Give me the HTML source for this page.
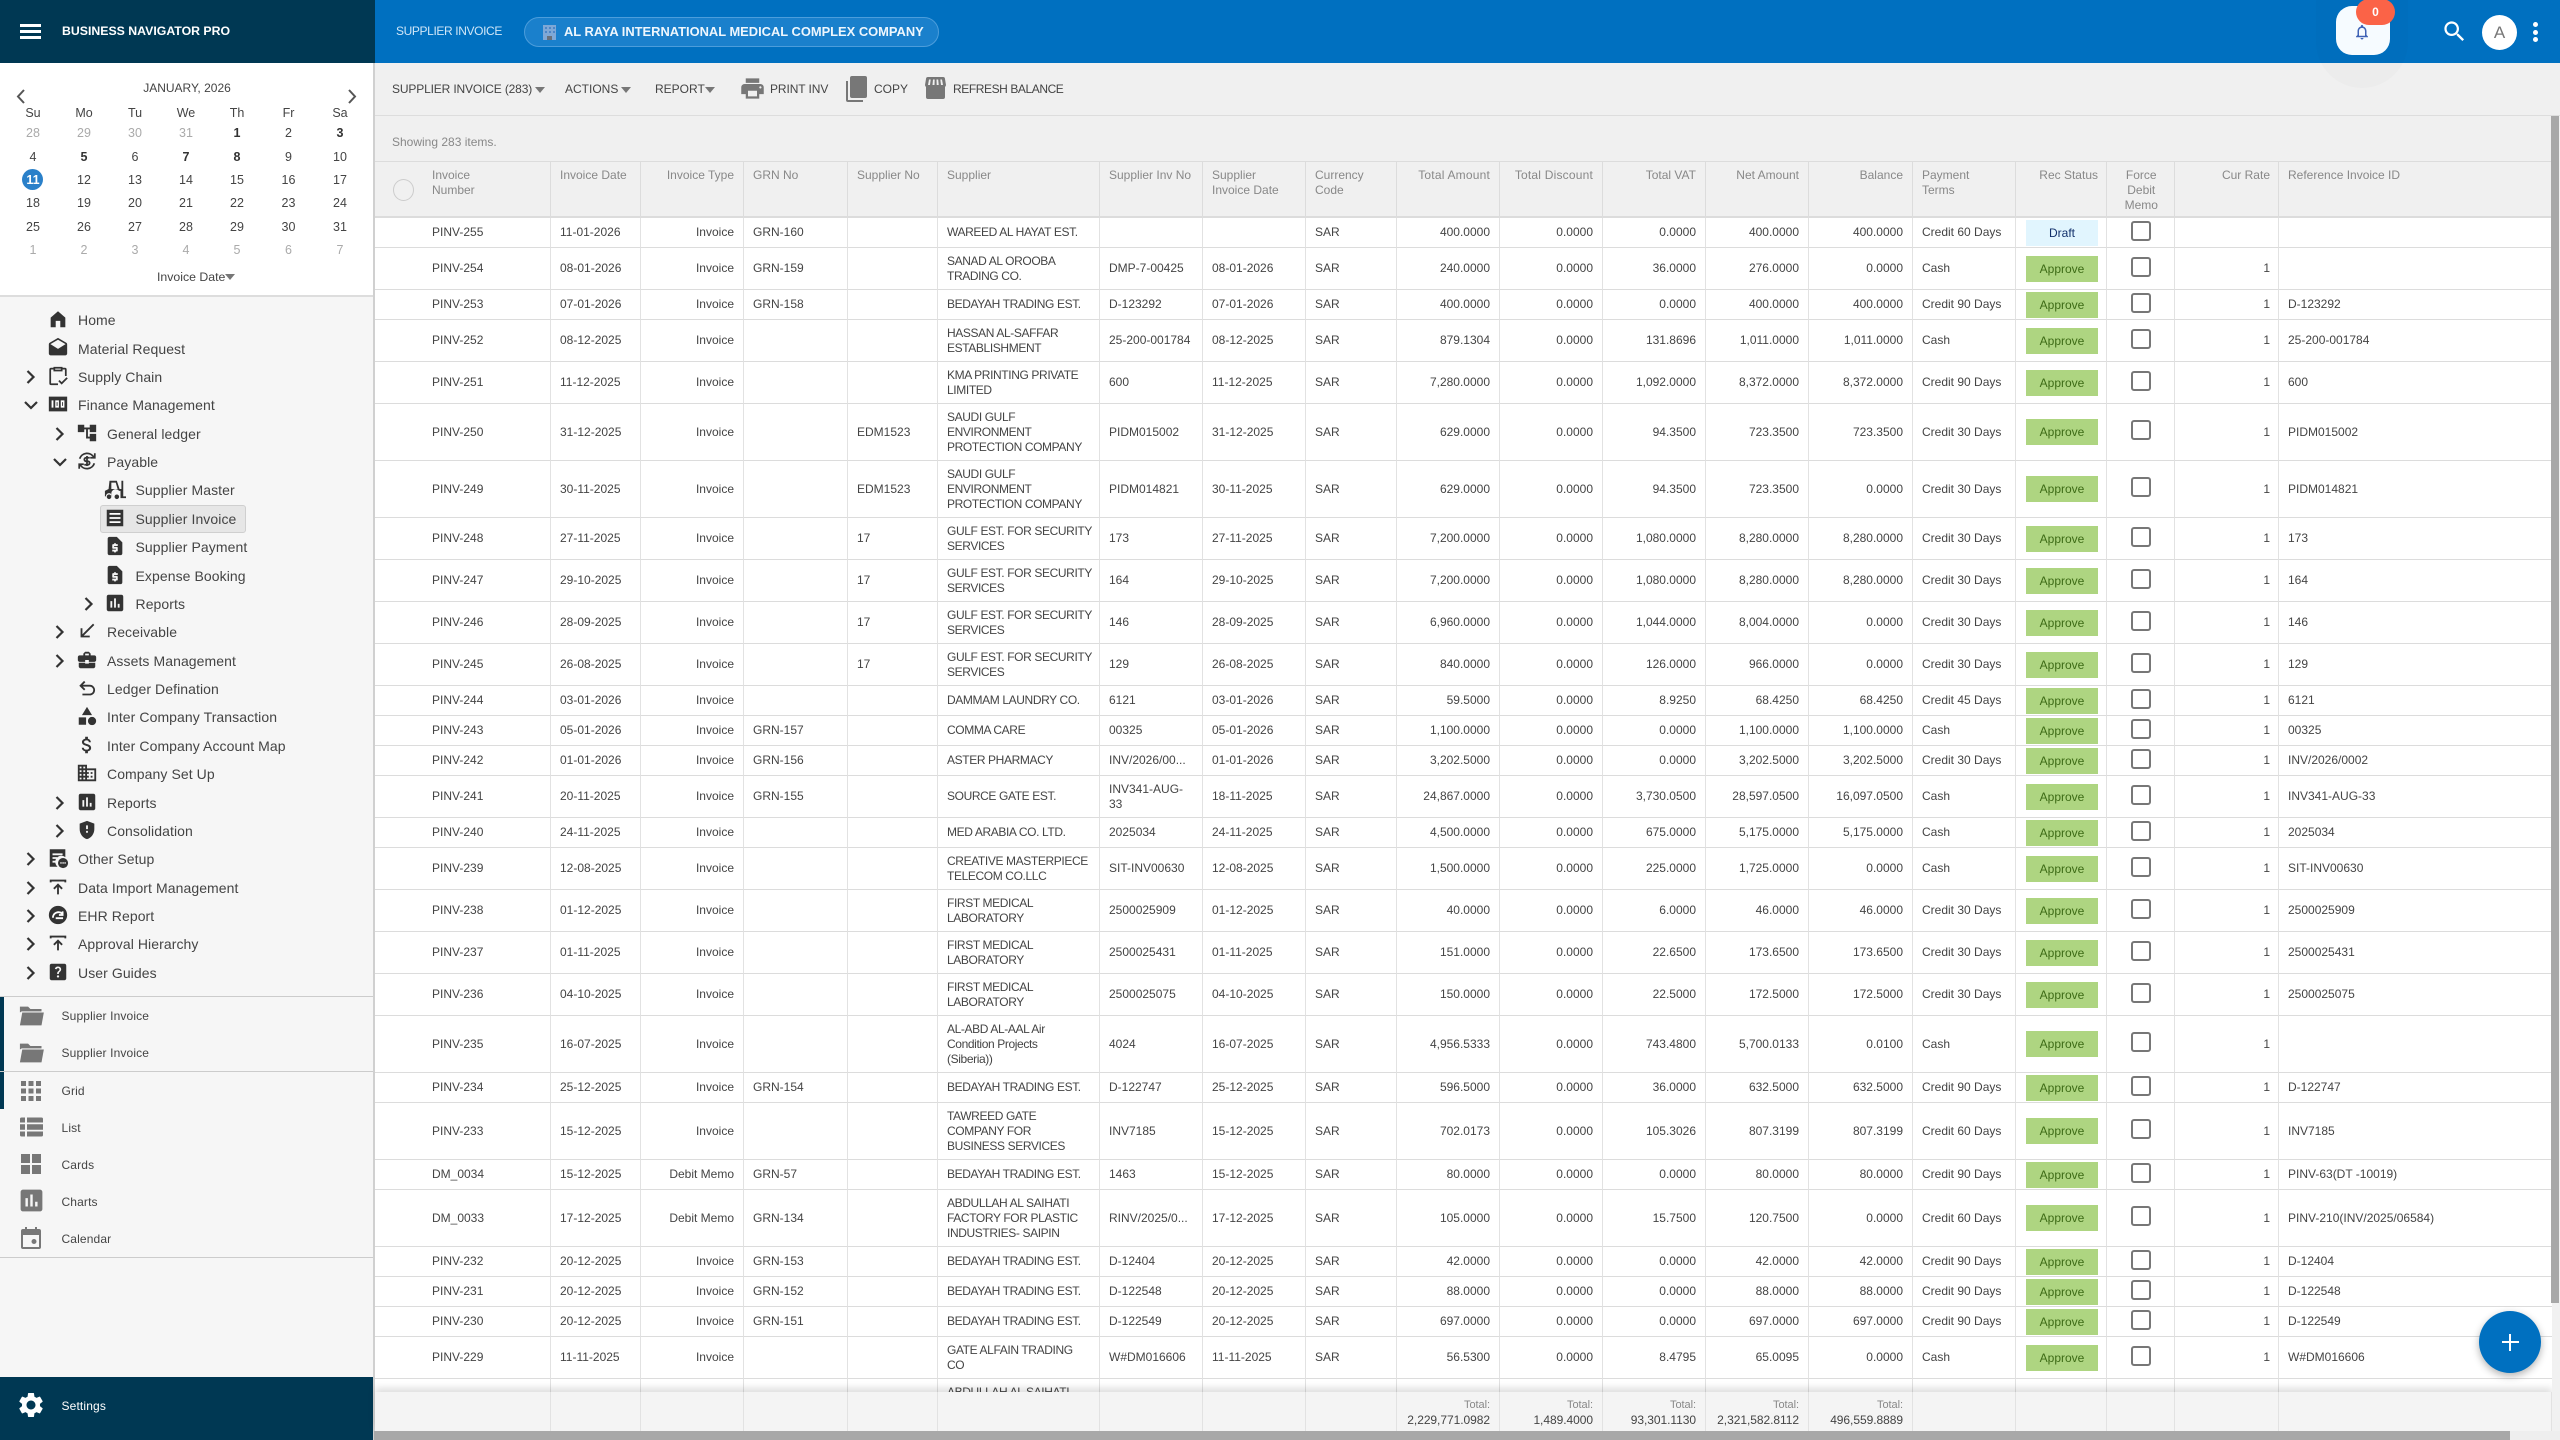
<!DOCTYPE html>
<html><head><meta charset="utf-8"><title>Supplier Invoice</title>
<style>
*{box-sizing:border-box}
html,body{margin:0;padding:0;width:2560px;height:1440px;overflow:hidden;background:#f0f0f0;font-family:"Liberation Sans",sans-serif;color:#444}
.abs,.cd,.m,.bt,.tb{position:absolute}
svg{display:block}
#lh{left:0;top:0;width:375px;height:63px;background:#003853;position:absolute}
#th{left:375px;top:0;width:2185px;height:63px;background:#0070c0;position:absolute}
#side{position:absolute;left:0;top:63px;width:375px;height:1377px;background:#f6f6f6;border-right:2px solid #d0d0d0}
#cal{position:absolute;left:0;top:63px;width:373px;height:234px;background:#fff;border-bottom:2px solid #ddd}
.cd{width:40px;margin-left:-20px;text-align:center;font-size:12.5px;line-height:16px;color:#444;height:16px}
.cd.g{color:#aaa}.cd.b{font-weight:bold;color:#333}
.m{height:24px;line-height:24px;font-size:14px;color:#444;letter-spacing:.08px;white-space:nowrap}
.m svg,.bt svg{position:absolute;top:0}
.bt{height:24px;line-height:24px;font-size:12px;color:#444;left:61.5px;letter-spacing:.14px}
.tb{font-size:12px;color:#444;line-height:16px;top:81px;white-space:nowrap}
.car{position:absolute;width:0;height:0;border-left:5.5px solid transparent;border-right:5.5px solid transparent;border-top:6px solid #777}
#wrap{position:absolute;left:375px;top:161px;width:2177px;height:1231px;overflow:hidden}
table{border-collapse:separate;border-spacing:0;table-layout:fixed;width:2177px}
td,th{padding:0 9px;font-size:12px;line-height:15px;font-weight:normal;border-right:1px solid #e2e2e2;border-bottom:1px solid #dcdcdc;color:#444;vertical-align:middle;text-align:left;white-space:nowrap;overflow:hidden;background:#fff}
th{height:57px;vertical-align:top;padding-top:6px;background:#f0f0f0;color:#888;border-top:1px solid #dcdcdc;border-right-color:#dcdcdc;border-bottom:2px solid #dcdcdc}
td:first-child,th:first-child{padding-left:57px}
tr.a td{height:30px}tr.b td{height:42px}tr.c td{height:57px}
td:nth-child(3),td:nth-child(n+10):nth-child(-n+14),td:nth-child(18),th:nth-child(3),th:nth-child(n+10):nth-child(-n+14),th:nth-child(16),th:nth-child(18){text-align:right}
th:nth-child(10),th:nth-child(11){letter-spacing:.2px}
th:nth-child(16){padding-right:8px}
td:nth-child(18),th:nth-child(18){padding-right:8px}
th:nth-child(17){text-align:center;padding:6px 0 0 1.5px}
td:nth-child(6){letter-spacing:-.38px}
td:nth-child(16){padding:0 0 0 10px}
td:nth-child(17){padding:0 0 0 1.5px}
td:last-child,th:last-child{border-right:0}
b.p,b.d{display:block;width:72px;height:26px;line-height:26px;text-align:center;font-weight:normal}
b.p{background:#aed581;color:#3d6b16}b.d{background:#e1f5fe;color:#12306b}
i.k{display:block;width:20px;height:20px;border:2.5px solid #777;border-radius:3px;margin:-4px auto 0;background:#fff}
#ft{position:absolute;left:375px;top:1392px;width:2177px;height:39px;box-shadow:0 -4px 7px rgba(0,0,0,.13)}
#ft td{height:39px;background:#f4f4f4;padding:2px 9px 0;line-height:15px;border-bottom:0;border-right:1px solid #e2e2e2;letter-spacing:-.05px}
#ft td:first-child{padding-left:0}
#ft span{color:#888;font-size:11px;display:block}
</style></head><body>
<div id="lh"></div><div id="th"></div>
<div class="abs" style="left:20px;top:24px;width:21px;height:3px;background:#fff"></div>
<div class="abs" style="left:20px;top:30px;width:21px;height:3px;background:#fff"></div>
<div class="abs" style="left:20px;top:36px;width:21px;height:3px;background:#fff"></div>
<div class="abs" style="left:62px;top:22px;font-size:12.3px;line-height:18px;font-weight:bold;color:#fff;white-space:nowrap">BUSINESS NAVIGATOR PRO</div>
<div class="abs" style="left:396px;top:22px;font-size:12px;line-height:18px;color:#cfe6f7;white-space:nowrap;letter-spacing:-.38px">SUPPLIER INVOICE</div>
<div class="abs" style="left:524px;top:17px;width:415px;height:30px;border-radius:15px;background:#1a80cc;border:1px solid #4c9ddb"></div>
<svg class="abs" style="left:541px;top:24px" width="17" height="17" viewBox="0 0 17 17"><rect x="2" y="1" width="13" height="15" fill="#7fa8d6"/><rect x="4" y="3" width="2" height="2" fill="#4d86c7"/><rect x="8" y="3" width="2" height="2" fill="#4d86c7"/><rect x="12" y="3" width="2" height="2" fill="#4d86c7"/><rect x="4" y="7" width="2" height="2" fill="#4d86c7"/><rect x="8" y="7" width="2" height="2" fill="#4d86c7"/><rect x="12" y="7" width="2" height="2" fill="#4d86c7"/><rect x="6" y="12" width="5" height="4" fill="#69707a"/></svg>
<div class="abs" style="left:564px;top:23px;font-size:12.9px;line-height:18px;font-weight:bold;color:#eef6fd;white-space:nowrap">AL RAYA INTERNATIONAL MEDICAL COMPLEX COMPANY</div>

<div class="abs" style="left:2316px;top:0;width:92px;height:88px;border-radius:0 0 46px 46px;background:rgba(0,0,0,.015)"></div>
<div class="abs" style="left:2336px;top:6px;width:54px;height:49px;border-radius:16px;background:#f6fbff"></div>
<svg class="abs" style="left:2353px;top:23px" width="18" height="18" viewBox="0 0 24 24"><path fill="#3f62b5" d="M12 22c1.1 0 2-.9 2-2h-4c0 1.1.9 2 2 2zm6-6v-5c0-3.07-1.63-5.64-4.5-6.32V4c0-.83-.67-1.5-1.5-1.5s-1.5.67-1.5 1.5v.68C7.64 5.36 6 7.92 6 11v5l-2 2v1h16v-1l-2-2zm-2 1H8v-6c0-2.48 1.51-4.5 4-4.5s4 2.02 4 4.5v6z"/></svg>
<div class="abs" style="left:2356px;top:-1px;width:39px;height:26px;border-radius:13px;background:#fb6347;color:#fff;font-size:12px;font-weight:bold;line-height:27px;text-align:center">0</div>
<svg class="abs" style="left:2441px;top:18px" width="27" height="27" viewBox="0 0 24 24"><path fill="#fff" d="M15.5 14h-.79l-.28-.27C15.41 12.59 16 11.11 16 9.5 16 5.91 13.09 3 9.5 3S3 5.91 3 9.5 5.91 16 9.5 16c1.61 0 3.09-.59 4.23-1.57l.27.28v.79l5 4.99L20.49 19l-4.99-5zm-6 0C7.01 14 5 11.99 5 9.5S7.01 5 9.5 5 14 7.01 14 9.5 11.99 14 9.5 14z"/></svg>
<div class="abs" style="left:2482px;top:15px;width:35px;height:35px;border-radius:50%;background:#fff;color:#777;font-size:17px;line-height:35px;text-align:center">A</div>
<div class="abs" style="left:2533px;top:22px;width:5px;height:5px;border-radius:50%;background:#fff"></div>
<div class="abs" style="left:2533px;top:29.5px;width:5px;height:5px;border-radius:50%;background:#fff"></div>
<div class="abs" style="left:2533px;top:36.5px;width:5px;height:5px;border-radius:50%;background:#fff"></div>

<div id="side"></div>
<div id="cal"></div>
<div class="abs" style="left:87px;top:80px;width:200px;text-align:center;font-size:12px;line-height:16px;color:#444">JANUARY, 2026</div>
<svg class="abs" style="left:14px;top:87px" width="14" height="18" viewBox="0 0 14 18"><path d="M10 3L4 9.5l6 6.5" fill="none" stroke="#555" stroke-width="2"/></svg>
<svg class="abs" style="left:345px;top:87px" width="14" height="18" viewBox="0 0 14 18"><path d="M4 3l6 6.5L4 16" fill="none" stroke="#555" stroke-width="2"/></svg>
<div class="abs" style="left:22px;top:169px;width:21px;height:21px;border-radius:50%;background:#2a80c9"></div>

<div class="cd" style="left:33px;top:105px">Su</div><div class="cd" style="left:84px;top:105px">Mo</div><div class="cd" style="left:135px;top:105px">Tu</div><div class="cd" style="left:186px;top:105px">We</div><div class="cd" style="left:237px;top:105px">Th</div><div class="cd" style="left:288.5px;top:105px">Fr</div><div class="cd" style="left:340px;top:105px">Sa</div>
<div class="cd g" style="left:33px;top:125px">28</div><div class="cd g" style="left:84px;top:125px">29</div><div class="cd g" style="left:135px;top:125px">30</div><div class="cd g" style="left:186px;top:125px">31</div><div class="cd b" style="left:237px;top:125px">1</div><div class="cd" style="left:288.5px;top:125px">2</div><div class="cd b" style="left:340px;top:125px">3</div>
<div class="cd" style="left:33px;top:149px">4</div><div class="cd b" style="left:84px;top:149px">5</div><div class="cd" style="left:135px;top:149px">6</div><div class="cd b" style="left:186px;top:149px">7</div><div class="cd b" style="left:237px;top:149px">8</div><div class="cd" style="left:288.5px;top:149px">9</div><div class="cd" style="left:340px;top:149px">10</div>
<div class="cd" style="left:33px;top:172px;color:#fff;font-weight:bold">11</div><div class="cd" style="left:84px;top:172px">12</div><div class="cd" style="left:135px;top:172px">13</div><div class="cd" style="left:186px;top:172px">14</div><div class="cd" style="left:237px;top:172px">15</div><div class="cd" style="left:288.5px;top:172px">16</div><div class="cd" style="left:340px;top:172px">17</div>
<div class="cd" style="left:33px;top:195px">18</div><div class="cd" style="left:84px;top:195px">19</div><div class="cd" style="left:135px;top:195px">20</div><div class="cd" style="left:186px;top:195px">21</div><div class="cd" style="left:237px;top:195px">22</div><div class="cd" style="left:288.5px;top:195px">23</div><div class="cd" style="left:340px;top:195px">24</div>
<div class="cd" style="left:33px;top:219px">25</div><div class="cd" style="left:84px;top:219px">26</div><div class="cd" style="left:135px;top:219px">27</div><div class="cd" style="left:186px;top:219px">28</div><div class="cd" style="left:237px;top:219px">29</div><div class="cd" style="left:288.5px;top:219px">30</div><div class="cd" style="left:340px;top:219px">31</div>
<div class="cd g" style="left:33px;top:242px">1</div><div class="cd g" style="left:84px;top:242px">2</div><div class="cd g" style="left:135px;top:242px">3</div><div class="cd g" style="left:186px;top:242px">4</div><div class="cd g" style="left:237px;top:242px">5</div><div class="cd g" style="left:288.5px;top:242px">6</div><div class="cd g" style="left:340px;top:242px">7</div>
<div class="abs" style="left:157px;top:269px;font-size:12.3px;line-height:16px;color:#444">Invoice Date</div>
<div class="car" style="left:225px;top:274px"></div>

<!-- menu -->
<svg width="0" height="0" style="position:absolute"><defs>
<path id="rt" d="M8.5 6l6 6-6 6" fill="none" stroke="#333" stroke-width="2.2"/>
<path id="dn" d="M6 9l6 6 6-6" fill="none" stroke="#333" stroke-width="2.2"/>
<path id="rep" fill="#333" d="M19 3H5c-1.1 0-2 .9-2 2v14c0 1.1.9 2 2 2h14c1.1 0 2-.9 2-2V5c0-1.1-.9-2-2-2zM9 17H7v-7h2v7zm4 0h-2V7h2v10zm4 0h-2v-4h2v4z"/>
<path id="quo" fill="#333" d="M14 2H6c-1.1 0-1.99.9-1.99 2L4 20c0 1.1.89 2 1.99 2H18c1.1 0 2-.9 2-2V8l-6-6zm1 10h-4v1h3c.55 0 1 .45 1 1v3c0 .55-.45 1-1 1h-1v1h-2v-1H9v-2h4v-1h-3c-.55 0-1-.45-1-1v-3c0-.55.45-1 1-1h1V9h2v1h2v2z"/>
<path id="pub" d="M4 7V5h16v2 M12 20V10 M7.5 14l4.5-4.5 4.5 4.5" fill="none" stroke="#333" stroke-width="2"/>
</defs></svg>

<div class="m" style="left:0;top:308px"><svg style="left:47px" width="22" height="22" viewBox="0 0 24 24"><path fill="#333" d="M12 3.5L20 10.5V21h-5.5v-7h-5v7H4V10.5z"/></svg><span style="margin-left:78px">Home</span></div>
<div class="m" style="left:0;top:337px"><svg style="left:47px" width="22" height="22" viewBox="0 0 24 24"><path fill="#333" d="M21.99 8c0-.72-.37-1.35-.94-1.7L12 1 2.95 6.3C2.38 6.65 2 7.28 2 8v10c0 1.1.9 2 2 2h16c1.1 0 2-.9 2-2l-.01-10zM12 13L3.74 7.84 12 3l8.26 4.84L12 13z"/></svg><span style="margin-left:78px">Material Request</span></div>
<div class="m" style="left:0;top:365px"><svg style="left:19px" width="24" height="24" viewBox="0 0 24 24"><use href="#rt"/></svg><svg style="left:47px" width="22" height="22" viewBox="0 0 24 24"><path d="M8 4H4.5a1 1 0 0 0-1 1v15a1 1 0 0 0 1 1H12 M16 4h3.500a1 1 0 0 1 1 1v7 M8 3h8v3H8z M13 17l3 3 6-6" fill="none" stroke="#333" stroke-width="1.9"/></svg><span style="margin-left:78px">Supply Chain</span></div>
<div class="m" style="left:0;top:393px"><svg style="left:19px" width="24" height="24" viewBox="0 0 24 24"><use href="#dn"/></svg><svg style="left:47px" width="22" height="22" viewBox="0 0 24 24"><path fill="#333" d="M2 4h20v16H2z"/><path fill="#fff" d="M5 8h2v8H5zM9 8h4v8H9zM15 8h4v8h-4z"/><path fill="#333" d="M10.500 10h1v4h-1zM16.500 10h1v4h-1z"/></svg><span style="margin-left:78px">Finance Management</span></div>
<div class="m" style="left:0;top:422px"><svg style="left:48px" width="24" height="24" viewBox="0 0 24 24"><use href="#rt"/></svg><svg style="left:76px" width="22" height="22" viewBox="0 0 24 24"><path fill="#333" d="M22 11V3h-7v3H9V3H2v8h7V8h2v10h4v3h7v-8h-7v3h-2V8h2v3z"/></svg><span style="margin-left:107px">General ledger</span></div>
<div class="m" style="left:0;top:450px"><svg style="left:48px" width="24" height="24" viewBox="0 0 24 24"><use href="#dn"/></svg><svg style="left:76px" width="22" height="22" viewBox="0 0 24 24"><g fill="none" stroke="#333" stroke-width="1.9"><path d="M4 9.500A8.500 8.500 0 0 1 19.500 8 M20 14.500A8.500 8.500 0 0 1 4.500 16"/><path d="M20.500 3.500V8.500H15.500 M3.500 20.500V15.500H8.500"/><path d="M15 8.500H11a1.900 1.900 0 0 0 0 3.800h2a1.900 1.900 0 0 1 0 3.800H9 M12 6.500v11"/></g></svg><span style="margin-left:107px">Payable</span></div>
<div class="m" style="left:0;top:478px"><svg style="left:104px" width="22" height="22" viewBox="0 0 24 24"><path fill="#333" d="M6 3h8l3 9h2V3h2v17h3v2h-6v-8h-1.500a4 4 0 0 0-7.500 6H9a3.500 3.500 0 0 0-7 0H1v-6l4-2zM8 5v7h6.800L12.800 5zM5.500 18a2.500 2.500 0 1 1 0 5 2.500 2.500 0 0 1 0-5zM14 18a2.500 2.500 0 1 1 0 5 2.500 2.500 0 0 1 0-5z"/></svg><span style="margin-left:135.500px">Supplier Master</span></div>
<div class="abs" style="left:99.500px;top:505px;width:146.500px;height:28px;background:#e6e6e6;border:1px solid #cfcfcf;border-radius:3px"></div>
<div class="m" style="left:0;top:507px"><svg style="left:104px" width="22" height="22" viewBox="0 0 24 24"><path fill="#333" d="M3 3h18v18H3z"/><path fill="#fff" d="M6 6.500h12v2H6zM6 11h12v2H6zM6 15.500h12v2H6z"/></svg><span style="margin-left:135.500px">Supplier Invoice</span></div>
<div class="m" style="left:0;top:535px"><svg style="left:104px" width="22" height="22" viewBox="0 0 24 24"><use href="#quo"/></svg><span style="margin-left:135.500px">Supplier Payment</span></div>
<div class="m" style="left:0;top:564px"><svg style="left:104px" width="22" height="22" viewBox="0 0 24 24"><use href="#quo"/></svg><span style="margin-left:135.500px">Expense Booking</span></div>
<div class="m" style="left:0;top:592px"><svg style="left:77px" width="24" height="24" viewBox="0 0 24 24"><use href="#rt"/></svg><svg style="left:104px" width="22" height="22" viewBox="0 0 24 24"><use href="#rep"/></svg><span style="margin-left:135.500px">Reports</span></div>
<div class="m" style="left:0;top:620px"><svg style="left:48px" width="24" height="24" viewBox="0 0 24 24"><use href="#rt"/></svg><svg style="left:76px" width="22" height="22" viewBox="0 0 24 24"><path fill="#333" d="M20 5.410L18.590 4 7 15.590V9H5v10h10v-2H8.410z"/></svg><span style="margin-left:107px">Receivable</span></div>
<div class="m" style="left:0;top:649px"><svg style="left:48px" width="24" height="24" viewBox="0 0 24 24"><use href="#rt"/></svg><svg style="left:76px" width="22" height="22" viewBox="0 0 24 24"><path fill="#333" d="M10 16v-1H3.010L3 19c0 1.110.89 2 2 2h14c1.110 0 2-.89 2-2v-4h-7v1h-4zm10-9h-4.010V5l-2-2h-4l-2 2v2H4c-1.100 0-2 .9-2 2v3c0 1.110.89 2 2 2h6v-2h4v2h6c1.100 0 2-.9 2-2V9c0-1.100-.9-2-2-2zm-6 0h-4V5h4v2z"/></svg><span style="margin-left:107px">Assets Management</span></div>
<div class="m" style="left:0;top:677px"><svg style="left:76px" width="22" height="22" viewBox="0 0 24 24"><path d="M9.500 5L5 9.500 9.500 14 M5 9.500h10a4.800 4.800 0 0 1 0 9.600H7" fill="none" stroke="#333" stroke-width="2"/></svg><span style="margin-left:107px">Ledger Defination</span></div>
<div class="m" style="left:0;top:705px"><svg style="left:76px" width="22" height="22" viewBox="0 0 24 24"><path fill="#333" d="M12 2l-5.500 9h11zM22 17.500a4.500 4.500 0 1 1-9 0 4.500 4.500 0 0 1 9 0zM3 13.500h8v8H3z"/></svg><span style="margin-left:107px">Inter Company Transaction</span></div>
<div class="m" style="left:0;top:734px"><svg style="left:76px" width="22" height="22" viewBox="0 0 24 24"><path fill="#333" d="M11.800 10.900c-2.270-.59-3-1.200-3-2.150 0-1.090 1.010-1.850 2.700-1.850 1.780 0 2.440.85 2.500 2.100h2.210c-.07-1.720-1.120-3.300-3.210-3.810V3h-3v2.160c-1.940.42-3.500 1.680-3.500 3.610 0 2.310 1.910 3.460 4.700 4.130 2.500.6 3 1.480 3 2.410 0 .69-.49 1.790-2.700 1.790-2.060 0-2.870-.92-2.980-2.100h-2.200c.12 2.190 1.760 3.420 3.680 3.830V21h3v-2.150c1.950-.37 3.500-1.500 3.500-3.550 0-2.840-2.430-3.810-4.700-4.400z"/></svg><span style="margin-left:107px">Inter Company Account Map</span></div>
<div class="m" style="left:0;top:762px"><svg style="left:76px" width="22" height="22" viewBox="0 0 24 24"><path fill="#333" d="M12 7V3H2v18h20V7H12zM6 19H4v-2h2v2zm0-4H4v-2h2v2zm0-4H4V9h2v2zm0-4H4V5h2v2zm4 12H8v-2h2v2zm0-4H8v-2h2v2zm0-4H8V9h2v2zm0-4H8V5h2v2zm10 12h-8v-2h2v-2h-2v-2h2v-2h-2V9h8v10zm-2-8h-2v2h2v-2zm0 4h-2v2h2v-2z"/></svg><span style="margin-left:107px">Company Set Up</span></div>
<div class="m" style="left:0;top:791px"><svg style="left:48px" width="24" height="24" viewBox="0 0 24 24"><use href="#rt"/></svg><svg style="left:76px" width="22" height="22" viewBox="0 0 24 24"><use href="#rep"/></svg><span style="margin-left:107px">Reports</span></div>
<div class="m" style="left:0;top:819px"><svg style="left:48px" width="24" height="24" viewBox="0 0 24 24"><use href="#rt"/></svg><svg style="left:76px" width="22" height="22" viewBox="0 0 24 24"><path fill="#333" d="M12 2L4 5v6.090c0 5.050 3.410 9.760 8 10.910 4.590-1.150 8-5.860 8-10.910V5l-8-3zm1 13h-2v-2h2v2zm0-4h-2V7h2v4z"/></svg><span style="margin-left:107px">Consolidation</span></div>
<div class="m" style="left:0;top:847px"><svg style="left:19px" width="24" height="24" viewBox="0 0 24 24"><use href="#rt"/></svg><svg style="left:47px" width="22" height="22" viewBox="0 0 24 24"><path fill="#333" d="M3 2.500h17V11a6.500 6.500 0 0 0-8.500 10.500H3z"/><path fill="#f6f6f6" d="M6 7h11v2H6zM6 11h5v2H6zM6 15h4v2H6z"/><circle cx="17.500" cy="17.500" r="5.500" fill="#333"/><path fill="#fff" d="M14.500 16.700h1.500v1.500h-1.500zM16.800 16.700h1.500v1.500h-1.500zM19 16.700h1.500v1.500H19z"/></svg><span style="margin-left:78px">Other Setup</span></div>
<div class="m" style="left:0;top:876px"><svg style="left:19px" width="24" height="24" viewBox="0 0 24 24"><use href="#rt"/></svg><svg style="left:47px" width="22" height="22" viewBox="0 0 24 24"><use href="#pub"/></svg><span style="margin-left:78px">Data Import Management</span></div>
<div class="m" style="left:0;top:904px"><svg style="left:19px" width="24" height="24" viewBox="0 0 24 24"><use href="#rt"/></svg><svg style="left:47px" width="22" height="22" viewBox="0 0 24 24"><circle cx="12" cy="12" r="10" fill="#333"/><path d="M6.500 15a6 6 0 0 1 10-4.500 M17 8v4h-4 M9.500 15.500h8" fill="none" stroke="#fff" stroke-width="2"/></svg><span style="margin-left:78px">EHR Report</span></div>
<div class="m" style="left:0;top:932px"><svg style="left:19px" width="24" height="24" viewBox="0 0 24 24"><use href="#rt"/></svg><svg style="left:47px" width="22" height="22" viewBox="0 0 24 24"><use href="#pub"/></svg><span style="margin-left:78px">Approval Hierarchy</span></div>
<div class="m" style="left:0;top:961px"><svg style="left:19px" width="24" height="24" viewBox="0 0 24 24"><use href="#rt"/></svg><svg style="left:47px" width="22" height="22" viewBox="0 0 24 24"><path fill="#333" d="M19 3H5c-1.100 0-2 .9-2 2v14c0 1.100.9 2 2 2h14c1.100 0 2-.9 2-2V5c0-1.100-.9-2-2-2zm-6.990 15c-.7 0-1.260-.56-1.260-1.260 0-.71.56-1.250 1.260-1.250.71 0 1.250.54 1.250 1.250-.01.69-.54 1.260-1.250 1.260zm3.010-7.400c-.76 1.110-1.480 1.460-1.870 2.170-.16.29-.22.48-.22 1.410h-1.820c0-.49-.08-1.290.31-1.980.49-.87 1.420-1.390 1.960-2.160.57-.81.25-2.330-1.370-2.330-1.060 0-1.580.8-1.800 1.480l-1.650-.7C9.010 7.150 10.220 6 11.990 6c1.480 0 2.490.67 3.010 1.520.44.72.7 2.070.02 3.080z"/></svg><span style="margin-left:78px">User Guides</span></div>

<div class="abs" style="left:0;top:996px;width:373px;height:1px;background:#ccc"></div>
<div class="abs" style="left:0;top:1071px;width:373px;height:1px;background:#ccc"></div>
<div class="abs" style="left:0;top:1257px;width:373px;height:1px;background:#ccc"></div>
<div class="abs" style="left:0;top:997px;width:4px;height:74px;background:#003853"></div>
<div class="abs" style="left:0;top:1072px;width:4px;height:37px;background:#003853"></div>

<svg class="abs" style="left:17px;top:1002px" width="28" height="28" viewBox="0 0 24 24"><path fill="#777" d="M2.500 4h7l2 2H21v2H4l-1.500 1z"/><path fill="#777" d="M4.500 9H23l-2 11H2.500z"/></svg><div class="bt" style="top:1004px">Supplier Invoice</div>
<svg class="abs" style="left:17px;top:1039px" width="28" height="28" viewBox="0 0 24 24"><path fill="#777" d="M2.500 4h7l2 2H21v2H4l-1.500 1z"/><path fill="#777" d="M4.500 9H23l-2 11H2.500z"/></svg><div class="bt" style="top:1041px">Supplier Invoice</div>
<svg class="abs" style="left:16px;top:1076px" width="30" height="30" viewBox="0 0 24 24"><path fill="#777" d="M4 8h4V4H4v4zm6 12h4v-4h-4v4zm-6 0h4v-4H4v4zm0-6h4v-4H4v4zm6 0h4v-4h-4v4zm6-10v4h4V4h-4zm-6 4h4V4h-4v4zm6 6h4v-4h-4v4zm0 6h4v-4h-4v4z"/></svg><div class="bt" style="top:1079px">Grid</div>
<svg class="abs" style="left:19px;top:1117px" width="24" height="20" viewBox="0 0 24 20"><path fill="#777" d="M1 2a1.500 1.500 0 0 1 1.500-1.500H6v5H1zM8 .5h14.500A1.500 1.500 0 0 1 24 2v3.500H8zM1 7.300h5v5.400H1zM8 7.300h16v5.400H8zM1 14.500h5v5H2.500A1.500 1.500 0 0 1 1 18zM8 14.500h16V18a1.500 1.500 0 0 1-1.500 1.500H8z"/></svg><div class="bt" style="top:1116px">List</div>
<svg class="abs" style="left:21px;top:1154px" width="20" height="20" viewBox="0 0 20 20"><path fill="#777" d="M0 0h9v9H0zM11 0h9v9h-9zM0 11h9v9H0zM11 11h9v9h-9z"/></svg><div class="bt" style="top:1152.500px">Cards</div>
<svg class="abs" style="left:16.500px;top:1186px" width="29" height="29" viewBox="0 0 24 24"><path fill="#777" d="M19 3H5c-1.100 0-2 .9-2 2v14c0 1.100.9 2 2 2h14c1.100 0 2-.9 2-2V5c0-1.100-.9-2-2-2zM9 17H7v-7h2v7zm4 0h-2V7h2v10zm4 0h-2v-4h2v4z"/></svg><div class="bt" style="top:1190px">Charts</div>
<svg class="abs" style="left:21px;top:1227px" width="20" height="22" viewBox="0 0 20 22"><path fill="#777" d="M4 0h2v2h8V0h2v2h2a2 2 0 0 1 2 2v16a2 2 0 0 1-2 2H2a2 2 0 0 1-2-2V4a2 2 0 0 1 2-2h2z"/><path fill="#f6f6f6" d="M2 8h16v12H2z"/><circle cx="13" cy="14.500" r="2.500" fill="#777"/></svg><div class="bt" style="top:1227px">Calendar</div>

<div class="abs" style="left:0;top:1377px;width:373px;height:63px;background:#003853"></div>
<svg class="abs" style="left:16px;top:1390px" width="30" height="30" viewBox="0 0 24 24"><path fill="#fff" d="M19.140 12.940c.04-.3.06-.61.06-.94 0-.32-.02-.64-.07-.94l2.030-1.580c.18-.14.23-.41.12-.61l-1.920-3.320c-.12-.22-.37-.29-.59-.22l-2.390.96c-.5-.38-1.030-.7-1.620-.94l-.36-2.540c-.04-.24-.24-.41-.48-.41h-3.840c-.24 0-.43.17-.47.41l-.36 2.540c-.59.24-1.130.57-1.620.94l-2.390-.96c-.22-.08-.47 0-.59.22L2.740 8.870c-.12.21-.08.47.12.61l2.030 1.580c-.05.3-.09.63-.09.94s.02.64.07.94l-2.030 1.580c-.18.14-.23.41-.12.61l1.920 3.320c.12.22.37.29.59.22l2.390-.96c.5.38 1.030.7 1.620.94l.36 2.540c.05.24.24.41.48.41h3.840c.24 0 .44-.17.47-.41l.36-2.540c.59-.24 1.130-.56 1.620-.94l2.390.96c.22.08.47 0 .59-.22l1.920-3.320c.12-.22.07-.47-.12-.61l-2.010-1.580zM12 15.600c-1.980 0-3.600-1.620-3.600-3.600s1.620-3.600 3.600-3.600 3.600 1.620 3.600 3.600-1.620 3.600-3.600 3.600z"/></svg>
<div class="bt" style="top:1393.500px;color:#fff">Settings</div>

<!-- toolbar -->
<div class="abs" style="left:375px;top:115px;width:2185px;height:1px;background:#ddd"></div>
<div class="tb" style="left:392px;letter-spacing:-.15px">SUPPLIER INVOICE (283)</div><div class="car" style="left:535px;top:87px"></div>
<div class="tb" style="left:565px">ACTIONS</div><div class="car" style="left:621px;top:87px"></div>
<div class="tb" style="left:655px">REPORT</div><div class="car" style="left:705px;top:87px"></div>
<svg class="abs" style="left:739px;top:75px" width="27" height="27" viewBox="0 0 24 24"><path fill="#777" d="M19 8H5c-1.660 0-3 1.340-3 3v6h4v4h12v-4h4v-6c0-1.660-1.340-3-3-3zm-3 11H8v-5h8v5zm3-7c-.55 0-1-.45-1-1s.45-1 1-1 1 .45 1 1-.45 1-1 1zm-1-9H6v4h12V3z"/></svg>
<div class="tb" style="left:770px;letter-spacing:-.1px">PRINT INV</div>
<svg class="abs" style="left:846px;top:76px" width="21" height="26" viewBox="0 0 21 26"><path fill="#777" d="M4 2a2 2 0 0 1 2-2h13a2 2 0 0 1 2 2v18a2 2 0 0 1-2 2H6a2 2 0 0 1-2-2z"/><path fill="#777" d="M0 5h2v19h15v2H2a2 2 0 0 1-2-2z"/></svg>
<div class="tb" style="left:874px">COPY</div>
<svg class="abs" style="left:925px;top:77px" width="21" height="22" viewBox="0 0 21 22"><path fill="#777" fill-rule="evenodd" d="M3 0h15a2 2 0 0 1 2 2l1 6a3 3 0 0 1-1 2v10a2 2 0 0 1-2 2H3a2 2 0 0 1-2-2V10a3 3 0 0 1-1-2l1-6a2 2 0 0 1 2-2zM4 2.500L3 8h2l.7-5.500zM8 2.500L7.500 8h2l.2-5.500zM11.500 2.500l.2 5.500h2L13.200 2.500zM15.300 2.500L16 8h2l-1-5.500z"/></svg>
<div class="tb" style="left:953px;letter-spacing:-.42px">REFRESH BALANCE</div>
<div class="abs" style="left:392px;top:134px;font-size:12px;line-height:16px;color:#888">Showing 283 items.</div>

<!-- table -->
<div id="wrap"><table><colgroup><col style="width:176px"><col style="width:90px"><col style="width:103px"><col style="width:104px"><col style="width:90px"><col style="width:162px"><col style="width:103px"><col style="width:103px"><col style="width:91px"><col style="width:103px"><col style="width:103px"><col style="width:103px"><col style="width:103px"><col style="width:104px"><col style="width:103px"><col style="width:91px"><col style="width:68px"><col style="width:104px"><col style="width:273px"></colgroup>
<tr><th>Invoice<br>Number</th><th>Invoice Date</th><th>Invoice Type</th><th>GRN No</th><th>Supplier No</th><th>Supplier</th><th>Supplier Inv No</th><th>Supplier<br>Invoice Date</th><th>Currency<br>Code</th><th>Total Amount</th><th>Total Discount</th><th>Total VAT</th><th>Net Amount</th><th>Balance</th><th>Payment<br>Terms</th><th>Rec Status</th><th>Force<br>Debit<br>Memo</th><th>Cur Rate</th><th>Reference Invoice ID</th></tr>
<tr class="a"><td>PINV-255</td><td>11-01-2026</td><td>Invoice</td><td>GRN-160</td><td></td><td>WAREED AL HAYAT EST.</td><td></td><td></td><td>SAR</td><td>400.0000</td><td>0.0000</td><td>0.0000</td><td>400.0000</td><td>400.0000</td><td>Credit 60 Days</td><td><b class="d">Draft</b></td><td><i class="k"></i></td><td></td><td></td></tr>
<tr class="b"><td>PINV-254</td><td>08-01-2026</td><td>Invoice</td><td>GRN-159</td><td></td><td>SANAD AL OROOBA<br>TRADING CO.</td><td>DMP-7-00425</td><td>08-01-2026</td><td>SAR</td><td>240.0000</td><td>0.0000</td><td>36.0000</td><td>276.0000</td><td>0.0000</td><td>Cash</td><td><b class="p">Approve</b></td><td><i class="k"></i></td><td>1</td><td></td></tr>
<tr class="a"><td>PINV-253</td><td>07-01-2026</td><td>Invoice</td><td>GRN-158</td><td></td><td>BEDAYAH TRADING EST.</td><td>D-123292</td><td>07-01-2026</td><td>SAR</td><td>400.0000</td><td>0.0000</td><td>0.0000</td><td>400.0000</td><td>400.0000</td><td>Credit 90 Days</td><td><b class="p">Approve</b></td><td><i class="k"></i></td><td>1</td><td>D-123292</td></tr>
<tr class="b"><td>PINV-252</td><td>08-12-2025</td><td>Invoice</td><td></td><td></td><td>HASSAN AL-SAFFAR<br>ESTABLISHMENT</td><td>25-200-001784</td><td>08-12-2025</td><td>SAR</td><td>879.1304</td><td>0.0000</td><td>131.8696</td><td>1,011.0000</td><td>1,011.0000</td><td>Cash</td><td><b class="p">Approve</b></td><td><i class="k"></i></td><td>1</td><td>25-200-001784</td></tr>
<tr class="b"><td>PINV-251</td><td>11-12-2025</td><td>Invoice</td><td></td><td></td><td>KMA PRINTING PRIVATE<br>LIMITED</td><td>600</td><td>11-12-2025</td><td>SAR</td><td>7,280.0000</td><td>0.0000</td><td>1,092.0000</td><td>8,372.0000</td><td>8,372.0000</td><td>Credit 90 Days</td><td><b class="p">Approve</b></td><td><i class="k"></i></td><td>1</td><td>600</td></tr>
<tr class="c"><td>PINV-250</td><td>31-12-2025</td><td>Invoice</td><td></td><td>EDM1523</td><td>SAUDI GULF<br>ENVIRONMENT<br>PROTECTION COMPANY</td><td>PIDM015002</td><td>31-12-2025</td><td>SAR</td><td>629.0000</td><td>0.0000</td><td>94.3500</td><td>723.3500</td><td>723.3500</td><td>Credit 30 Days</td><td><b class="p">Approve</b></td><td><i class="k"></i></td><td>1</td><td>PIDM015002</td></tr>
<tr class="c"><td>PINV-249</td><td>30-11-2025</td><td>Invoice</td><td></td><td>EDM1523</td><td>SAUDI GULF<br>ENVIRONMENT<br>PROTECTION COMPANY</td><td>PIDM014821</td><td>30-11-2025</td><td>SAR</td><td>629.0000</td><td>0.0000</td><td>94.3500</td><td>723.3500</td><td>0.0000</td><td>Credit 30 Days</td><td><b class="p">Approve</b></td><td><i class="k"></i></td><td>1</td><td>PIDM014821</td></tr>
<tr class="b"><td>PINV-248</td><td>27-11-2025</td><td>Invoice</td><td></td><td>17</td><td>GULF EST. FOR SECURITY<br>SERVICES</td><td>173</td><td>27-11-2025</td><td>SAR</td><td>7,200.0000</td><td>0.0000</td><td>1,080.0000</td><td>8,280.0000</td><td>8,280.0000</td><td>Credit 30 Days</td><td><b class="p">Approve</b></td><td><i class="k"></i></td><td>1</td><td>173</td></tr>
<tr class="b"><td>PINV-247</td><td>29-10-2025</td><td>Invoice</td><td></td><td>17</td><td>GULF EST. FOR SECURITY<br>SERVICES</td><td>164</td><td>29-10-2025</td><td>SAR</td><td>7,200.0000</td><td>0.0000</td><td>1,080.0000</td><td>8,280.0000</td><td>8,280.0000</td><td>Credit 30 Days</td><td><b class="p">Approve</b></td><td><i class="k"></i></td><td>1</td><td>164</td></tr>
<tr class="b"><td>PINV-246</td><td>28-09-2025</td><td>Invoice</td><td></td><td>17</td><td>GULF EST. FOR SECURITY<br>SERVICES</td><td>146</td><td>28-09-2025</td><td>SAR</td><td>6,960.0000</td><td>0.0000</td><td>1,044.0000</td><td>8,004.0000</td><td>0.0000</td><td>Credit 30 Days</td><td><b class="p">Approve</b></td><td><i class="k"></i></td><td>1</td><td>146</td></tr>
<tr class="b"><td>PINV-245</td><td>26-08-2025</td><td>Invoice</td><td></td><td>17</td><td>GULF EST. FOR SECURITY<br>SERVICES</td><td>129</td><td>26-08-2025</td><td>SAR</td><td>840.0000</td><td>0.0000</td><td>126.0000</td><td>966.0000</td><td>0.0000</td><td>Credit 30 Days</td><td><b class="p">Approve</b></td><td><i class="k"></i></td><td>1</td><td>129</td></tr>
<tr class="a"><td>PINV-244</td><td>03-01-2026</td><td>Invoice</td><td></td><td></td><td>DAMMAM LAUNDRY CO.</td><td>6121</td><td>03-01-2026</td><td>SAR</td><td>59.5000</td><td>0.0000</td><td>8.9250</td><td>68.4250</td><td>68.4250</td><td>Credit 45 Days</td><td><b class="p">Approve</b></td><td><i class="k"></i></td><td>1</td><td>6121</td></tr>
<tr class="a"><td>PINV-243</td><td>05-01-2026</td><td>Invoice</td><td>GRN-157</td><td></td><td>COMMA CARE</td><td>00325</td><td>05-01-2026</td><td>SAR</td><td>1,100.0000</td><td>0.0000</td><td>0.0000</td><td>1,100.0000</td><td>1,100.0000</td><td>Cash</td><td><b class="p">Approve</b></td><td><i class="k"></i></td><td>1</td><td>00325</td></tr>
<tr class="a"><td>PINV-242</td><td>01-01-2026</td><td>Invoice</td><td>GRN-156</td><td></td><td>ASTER PHARMACY</td><td>INV/2026/00...</td><td>01-01-2026</td><td>SAR</td><td>3,202.5000</td><td>0.0000</td><td>0.0000</td><td>3,202.5000</td><td>3,202.5000</td><td>Credit 30 Days</td><td><b class="p">Approve</b></td><td><i class="k"></i></td><td>1</td><td>INV/2026/0002</td></tr>
<tr class="b"><td>PINV-241</td><td>20-11-2025</td><td>Invoice</td><td>GRN-155</td><td></td><td>SOURCE GATE EST.</td><td>INV341-AUG-<br>33</td><td>18-11-2025</td><td>SAR</td><td>24,867.0000</td><td>0.0000</td><td>3,730.0500</td><td>28,597.0500</td><td>16,097.0500</td><td>Cash</td><td><b class="p">Approve</b></td><td><i class="k"></i></td><td>1</td><td>INV341-AUG-33</td></tr>
<tr class="a"><td>PINV-240</td><td>24-11-2025</td><td>Invoice</td><td></td><td></td><td>MED ARABIA CO. LTD.</td><td>2025034</td><td>24-11-2025</td><td>SAR</td><td>4,500.0000</td><td>0.0000</td><td>675.0000</td><td>5,175.0000</td><td>5,175.0000</td><td>Cash</td><td><b class="p">Approve</b></td><td><i class="k"></i></td><td>1</td><td>2025034</td></tr>
<tr class="b"><td>PINV-239</td><td>12-08-2025</td><td>Invoice</td><td></td><td></td><td>CREATIVE MASTERPIECE<br>TELECOM CO.LLC</td><td>SIT-INV00630</td><td>12-08-2025</td><td>SAR</td><td>1,500.0000</td><td>0.0000</td><td>225.0000</td><td>1,725.0000</td><td>0.0000</td><td>Cash</td><td><b class="p">Approve</b></td><td><i class="k"></i></td><td>1</td><td>SIT-INV00630</td></tr>
<tr class="b"><td>PINV-238</td><td>01-12-2025</td><td>Invoice</td><td></td><td></td><td>FIRST MEDICAL<br>LABORATORY</td><td>2500025909</td><td>01-12-2025</td><td>SAR</td><td>40.0000</td><td>0.0000</td><td>6.0000</td><td>46.0000</td><td>46.0000</td><td>Credit 30 Days</td><td><b class="p">Approve</b></td><td><i class="k"></i></td><td>1</td><td>2500025909</td></tr>
<tr class="b"><td>PINV-237</td><td>01-11-2025</td><td>Invoice</td><td></td><td></td><td>FIRST MEDICAL<br>LABORATORY</td><td>2500025431</td><td>01-11-2025</td><td>SAR</td><td>151.0000</td><td>0.0000</td><td>22.6500</td><td>173.6500</td><td>173.6500</td><td>Credit 30 Days</td><td><b class="p">Approve</b></td><td><i class="k"></i></td><td>1</td><td>2500025431</td></tr>
<tr class="b"><td>PINV-236</td><td>04-10-2025</td><td>Invoice</td><td></td><td></td><td>FIRST MEDICAL<br>LABORATORY</td><td>2500025075</td><td>04-10-2025</td><td>SAR</td><td>150.0000</td><td>0.0000</td><td>22.5000</td><td>172.5000</td><td>172.5000</td><td>Credit 30 Days</td><td><b class="p">Approve</b></td><td><i class="k"></i></td><td>1</td><td>2500025075</td></tr>
<tr class="c"><td>PINV-235</td><td>16-07-2025</td><td>Invoice</td><td></td><td></td><td>AL-ABD AL-AAL Air<br>Condition Projects<br>(Siberia))</td><td>4024</td><td>16-07-2025</td><td>SAR</td><td>4,956.5333</td><td>0.0000</td><td>743.4800</td><td>5,700.0133</td><td>0.0100</td><td>Cash</td><td><b class="p">Approve</b></td><td><i class="k"></i></td><td>1</td><td></td></tr>
<tr class="a"><td>PINV-234</td><td>25-12-2025</td><td>Invoice</td><td>GRN-154</td><td></td><td>BEDAYAH TRADING EST.</td><td>D-122747</td><td>25-12-2025</td><td>SAR</td><td>596.5000</td><td>0.0000</td><td>36.0000</td><td>632.5000</td><td>632.5000</td><td>Credit 90 Days</td><td><b class="p">Approve</b></td><td><i class="k"></i></td><td>1</td><td>D-122747</td></tr>
<tr class="c"><td>PINV-233</td><td>15-12-2025</td><td>Invoice</td><td></td><td></td><td>TAWREED GATE<br>COMPANY FOR<br>BUSINESS SERVICES</td><td>INV7185</td><td>15-12-2025</td><td>SAR</td><td>702.0173</td><td>0.0000</td><td>105.3026</td><td>807.3199</td><td>807.3199</td><td>Credit 60 Days</td><td><b class="p">Approve</b></td><td><i class="k"></i></td><td>1</td><td>INV7185</td></tr>
<tr class="a"><td>DM_0034</td><td>15-12-2025</td><td>Debit Memo</td><td>GRN-57</td><td></td><td>BEDAYAH TRADING EST.</td><td>1463</td><td>15-12-2025</td><td>SAR</td><td>80.0000</td><td>0.0000</td><td>0.0000</td><td>80.0000</td><td>80.0000</td><td>Credit 90 Days</td><td><b class="p">Approve</b></td><td><i class="k"></i></td><td>1</td><td>PINV-63(DT -10019)</td></tr>
<tr class="c"><td>DM_0033</td><td>17-12-2025</td><td>Debit Memo</td><td>GRN-134</td><td></td><td>ABDULLAH AL SAIHATI<br>FACTORY FOR PLASTIC<br>INDUSTRIES- SAIPIN</td><td>RINV/2025/0...</td><td>17-12-2025</td><td>SAR</td><td>105.0000</td><td>0.0000</td><td>15.7500</td><td>120.7500</td><td>0.0000</td><td>Credit 60 Days</td><td><b class="p">Approve</b></td><td><i class="k"></i></td><td>1</td><td>PINV-210(INV/2025/06584)</td></tr>
<tr class="a"><td>PINV-232</td><td>20-12-2025</td><td>Invoice</td><td>GRN-153</td><td></td><td>BEDAYAH TRADING EST.</td><td>D-12404</td><td>20-12-2025</td><td>SAR</td><td>42.0000</td><td>0.0000</td><td>0.0000</td><td>42.0000</td><td>42.0000</td><td>Credit 90 Days</td><td><b class="p">Approve</b></td><td><i class="k"></i></td><td>1</td><td>D-12404</td></tr>
<tr class="a"><td>PINV-231</td><td>20-12-2025</td><td>Invoice</td><td>GRN-152</td><td></td><td>BEDAYAH TRADING EST.</td><td>D-122548</td><td>20-12-2025</td><td>SAR</td><td>88.0000</td><td>0.0000</td><td>0.0000</td><td>88.0000</td><td>88.0000</td><td>Credit 90 Days</td><td><b class="p">Approve</b></td><td><i class="k"></i></td><td>1</td><td>D-122548</td></tr>
<tr class="a"><td>PINV-230</td><td>20-12-2025</td><td>Invoice</td><td>GRN-151</td><td></td><td>BEDAYAH TRADING EST.</td><td>D-122549</td><td>20-12-2025</td><td>SAR</td><td>697.0000</td><td>0.0000</td><td>0.0000</td><td>697.0000</td><td>697.0000</td><td>Credit 90 Days</td><td><b class="p">Approve</b></td><td><i class="k"></i></td><td>1</td><td>D-122549</td></tr>
<tr class="b"><td>PINV-229</td><td>11-11-2025</td><td>Invoice</td><td></td><td></td><td>GATE ALFAIN TRADING<br>CO</td><td>W#DM016606</td><td>11-11-2025</td><td>SAR</td><td>56.5300</td><td>0.0000</td><td>8.4795</td><td>65.0095</td><td>0.0000</td><td>Cash</td><td><b class="p">Approve</b></td><td><i class="k"></i></td><td>1</td><td>W#DM016606</td></tr>
<tr class="c"><td></td><td></td><td></td><td></td><td></td><td>ABDULLAH AL SAIHATI<br>FACTORY FOR PLASTIC<br>INDUSTRIES- SAIPIN</td><td></td><td></td><td></td><td></td><td></td><td></td><td></td><td></td><td></td><td></td><td></td><td></td><td></td></tr>
</table></div>
<div class="abs" style="left:393px;top:179px;width:21px;height:22px;border-radius:50%;border:1px solid #ccc"></div>

<div id="ft"><table><colgroup><col style="width:176px"><col style="width:90px"><col style="width:103px"><col style="width:104px"><col style="width:90px"><col style="width:162px"><col style="width:103px"><col style="width:103px"><col style="width:91px"><col style="width:103px"><col style="width:103px"><col style="width:103px"><col style="width:103px"><col style="width:104px"><col style="width:103px"><col style="width:91px"><col style="width:68px"><col style="width:104px"><col style="width:273px"></colgroup>
<tr><td></td><td></td><td></td><td></td><td></td><td></td><td></td><td></td><td></td><td><span>Total:</span>2,229,771.0982</td><td><span>Total:</span>1,489.4000</td><td><span>Total:</span>93,301.1130</td><td><span>Total:</span>2,321,582.8112</td><td><span>Total:</span>496,559.8889</td><td></td><td></td><td></td><td></td><td></td></tr></table></div>

<div class="abs" style="left:374px;top:1431px;width:2186px;height:9px;background:#eee"></div>
<div class="abs" style="left:374px;top:1431px;width:2136px;height:9px;background:#a8a8a8"></div>
<div class="abs" style="left:2552px;top:116px;width:8px;height:1315px;background:#f1f1f1"></div>
<div class="abs" style="left:2551px;top:116px;width:8px;height:1187px;background:#a8a8a8"></div>
<div class="abs" style="left:2479px;top:1311px;width:62px;height:62px;border-radius:50%;background:#0070c0;box-shadow:0 3px 8px rgba(0,0,0,.3)"></div>
<div class="abs" style="left:2501.500px;top:1341px;width:17px;height:2px;background:#fff"></div>
<div class="abs" style="left:2509px;top:1333.500px;width:2px;height:17px;background:#fff"></div>
</body></html>
